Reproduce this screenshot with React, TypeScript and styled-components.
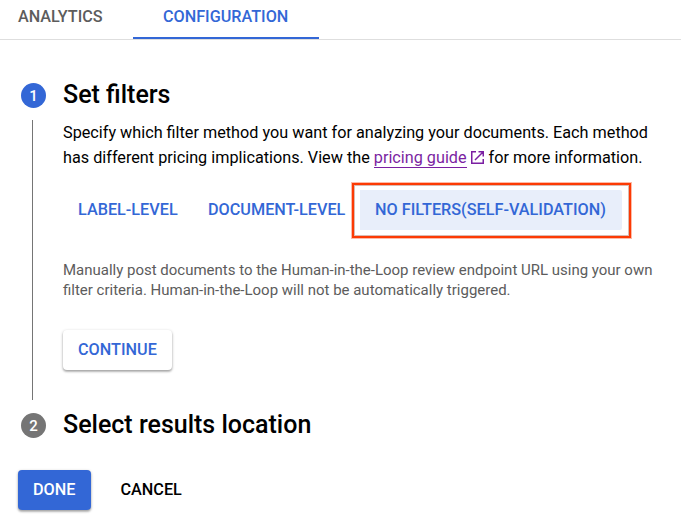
import React from "react";
import styled, { createGlobalStyle } from "styled-components";

const GlobalStyle = createGlobalStyle`
  * { box-sizing: border-box; }
  body {
    margin: 0;
    background: #fff;
    color: #000;
    font-family: Roboto, sans-serif;
    overflow: hidden;
  }
`;

const Page = styled.main`
  width: 681px;
  height: 525px;
  overflow: hidden;
`;

const TabBar = styled.nav`
  display: flex;
  height: 40px;
  border-bottom: 1px solid #dedede;
`;

const Tab = styled.button<{ $active?: boolean; $width: number }>`
  width: ${(p) => p.$width}px;
  height: 39px;
  padding: 0 0 4px;
  border: 0;
  border-bottom: 2px solid ${(p) => (p.$active ? "#3367d6" : "transparent")};
  background: none;
  color: ${(p) => (p.$active ? "#3367d6" : "#5c5c5c")};
  font: 500 16.2px/20px Roboto, sans-serif;
  white-space: nowrap;
  text-align: left;
  padding-left: ${(p) => (p.$active ? 30 : 18)}px;
`;

const Step = styled.section`
  display: grid;
  grid-template-columns: 63px 1fr;
  grid-template-rows: 30px auto;
`;

const Badge = styled.span<{ $active?: boolean }>`
  display: flex;
  align-items: center;
  justify-content: center;
  width: 25px;
  height: 25px;
  margin: 3px 0 0 21px;
  border-radius: 50%;
  background: ${(p) => (p.$active ? "#3367d6" : "#757575")};
  color: #fff;
  font-size: 15px;
  font-weight: 500;
`;

const StepTitle = styled.h2`
  margin: 0;
  font-size: 25px;
  font-weight: 500;
  line-height: 30px;
`;

const Connector = styled.div`
  width: 1px;
  height: 280px;
  margin: 10px 0 0 32px;
  background: #757575;
`;

const Intro = styled.p`
  margin: 10px 0 0;
  font-size: 16.23px;
  line-height: 25px;
  white-space: nowrap;
`;

const Link = styled.a`
  color: #7b1fa2;
  text-decoration: none;
  border-bottom: 1px solid #7b1fa2;
`;

const ExternalIcon = styled.svg`
  width: 13px;
  height: 13px;
  margin: 0 5px 0 4px;
  vertical-align: -1px;
`;

const FilterRow = styled.div`
  display: flex;
  align-items: center;
  height: 55px;
  margin-top: 13px;
  padding-bottom: 1px;
`;

const Button = styled.button<{ $kind?: "selected" | "raised" | "primary" | "plain"; $width: number }>`
  flex: none;
  width: ${(p) => p.$width}px;
  height: 40px;
  padding: 0 0 0 15px;
  border: 0;
  border-radius: ${(p) => (p.$kind === "selected" ? "0 2px 2px 0" : "4px")};
  background: ${(p) =>
    p.$kind === "primary" ? "#3367d6" : p.$kind === "selected" ? "#e8eefa" : p.$kind === "raised" ? "#fff" : "none"};
  box-shadow: ${(p) =>
    p.$kind === "primary" || p.$kind === "raised"
      ? "0 1px 3px rgba(0,0,0,.3), 0 2px 2px rgba(0,0,0,.16)"
      : "none"};
  color: ${(p) => (p.$kind === "primary" ? "#fff" : p.$kind === "plain" ? "#000" : "#3367d6")};
  font: 500 16.23px/20px Roboto, sans-serif;
  white-space: nowrap;
  text-align: left;
`;

const Highlight = styled.div`
  display: flex;
  flex: none;
  align-self: flex-start;
  width: 279px;
  height: 55px;
  margin-left: -8px;
  padding: 5px 0 0 6px;
  border: 2px solid #fc3a04;
  box-shadow: 0 0 0 1px rgba(252, 58, 4, 0.35), inset 0 0 0 1px rgba(150, 60, 35, 0.35);
`;

const Hint = styled.p`
  margin: 22px 0 30px;
  color: #5c5c5c;
  font-size: 14.99px;
  line-height: 20px;
  white-space: nowrap;
`;

const Steps = styled.div`
  padding-top: 40px;
`;

const Gap = styled.div`
  height: 10px;
`;

const Actions = styled.footer`
  display: flex;
  gap: 14.5px;
  padding: 30px 0 0 18px;
`;

export default function App() {
  return (
    <Page>
      <GlobalStyle />
      <TabBar>
        <Tab $width={133}>ANALYTICS</Tab>
        <Tab $active $width={186}>CONFIGURATION</Tab>
      </TabBar>
      <Steps>
        <Step>
          <Badge $active>1</Badge>
          <StepTitle>Set filters</StepTitle>
          <Connector />
          <div>
            <Intro>
              Specify which filter method you want for analyzing your documents. Each method
              <br />
              has different pricing implications. View the <Link href="#">pricing guide</Link>
              <ExternalIcon viewBox="0 0 13 13" fill="none" stroke="#7b1fa2" strokeWidth="1.5">
                <path d="M5 .75H.75v11.5h11.5V8M7.5 .75h4.75V5.5M12 1 4 9" />
              </ExternalIcon>
              for more information.
            </Intro>
            <FilterRow>
              <Button $width={130}>LABEL-LEVEL</Button>
              <Button $width={167}>DOCUMENT-LEVEL</Button>
              <Highlight>
                <Button $kind="selected" $width={262}>NO FILTERS(SELF-VALIDATION)</Button>
              </Highlight>
            </FilterRow>
            <Hint>
              Manually post documents to the Human-in-the-Loop review endpoint URL using your own
              <br />
              filter criteria. Human-in-the-Loop will not be automatically triggered.
            </Hint>
            <Button $kind="raised" $width={109}>CONTINUE</Button>
          </div>
        </Step>
        <Gap />
        <Step>
          <Badge>2</Badge>
          <StepTitle>Select results location</StepTitle>
        </Step>
      </Steps>
      <Actions>
        <Button $kind="primary" $width={73}>DONE</Button>
        <Button $kind="plain" $width={92}>CANCEL</Button>
      </Actions>
    </Page>
  );
}
